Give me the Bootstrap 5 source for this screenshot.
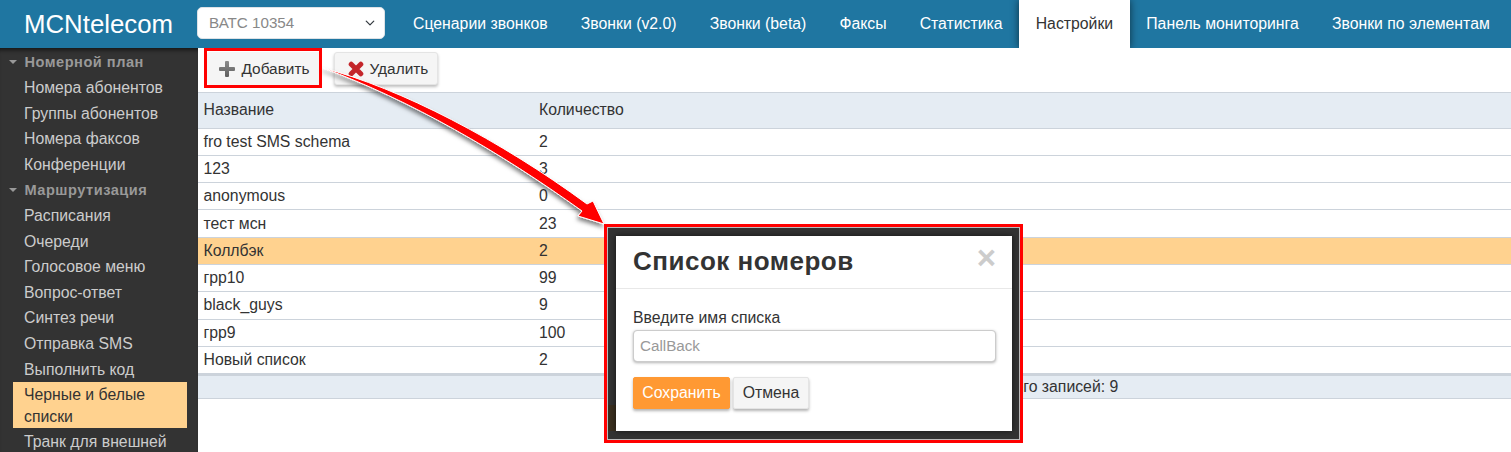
<!doctype html>
<html lang="ru">
<head>
<meta charset="utf-8">
<title>MCNtelecom</title>
<link href="https://cdn.jsdelivr.net/npm/bootstrap@5.3.0/dist/css/bootstrap.min.css" rel="stylesheet">
<style>
html,body{height:452px;overflow:hidden}
body{font-family:"Liberation Sans",Arial,sans-serif;font-size:15.8px;color:#333;background:#fff;position:relative}
.topbar{height:48px;background:#1f76a1;position:relative;z-index:2}
.brand-name{width:197px;padding-left:24px;font-size:25.8px;line-height:48px;color:#fff;white-space:nowrap}
.pbx-select{width:188px;height:32px;margin-top:7px;font-size:15.2px;color:#888;border-radius:5px;padding:1px 11px 0;background-position:right 8px center;background-size:12px 10px}
.top-tabs{margin-left:11.5px}
.top-tab{height:48px;line-height:47px;padding:0 16.55px;color:#fff;text-decoration:none;white-space:nowrap;font-size:15.8px}
.top-tab.on{background:#fff;color:#333;box-shadow:0 0 8px rgba(0,0,0,.6);clip-path:inset(0 -10px 0 -10px)}
.body-wrap{height:404px}
.side{width:198px;background:#333;color:#ccc;padding-top:1.4px;box-shadow:inset 0 5px 4px -3px rgba(0,0,0,.6);overflow:hidden;flex:none}
.side-head{height:25.6px;line-height:27px;color:#999;font-weight:700;letter-spacing:.5px;padding-left:24.5px;position:relative;font-size:14.6px}
.side-head::before{content:"";position:absolute;left:9px;top:11px;border:4px solid transparent;border-top:4px solid #999;border-bottom:0}
.side-item{line-height:25.6px;padding-left:24px;white-space:nowrap}
.side-item.on{background:#ffd28f;color:#333;margin:0 11px 0 13px;padding:2px 0 0 11px;white-space:normal;line-height:21.5px;height:46px;margin-bottom:1px}
.main-pane{min-width:0}
.tools{height:43.5px;padding:4px 0 0 9px;gap:13px}
.tool-btn{height:33px;font-size:15.4px;padding:0 9px 0 13px;color:#333;background:#f5f5f5;border:1px solid #e4e4e4;border-radius:3px;box-shadow:0 2px 3px rgba(0,0,0,.25);display:flex;align-items:center;gap:6px}
.add-btn{box-shadow:none;border-color:#f5f5f5;padding:0 10px 0 11px;gap:6.5px}
.list-tbl{width:100%;margin:0;table-layout:fixed;color:#333;font-size:15.8px}
.list-tbl th,.list-tbl td{padding:0 0 1px 5.5px;font-weight:400;border-bottom:1px solid #ccd3db;border-top:0;height:27.3px;line-height:25px;vertical-align:middle}
.list-tbl thead th{background:#e5ecf3;height:36px;border-top:1px solid #ccd3db;border-bottom:1px solid #ccd3db;vertical-align:middle;padding-bottom:2px}
.list-tbl .c1{width:335.5px}
.list-tbl tr.hl td{background:#ffd28f}
.tbl-foot{height:25px;background:#e5ecf3;border-top:2px solid #ccd3db;border-bottom:1px solid #ccd3db;line-height:21px;text-align:left;padding-left:798px}
.redbox{position:absolute;border:3px solid #f00;z-index:5}
.red-add{left:204px;top:48px;width:118px;height:40px}
.red-modal{left:604px;top:224px;width:419px;height:219px;border:3px solid #f00;background:linear-gradient(#3a2f1f,#3a2f1f) no-repeat 0 178px/9px 26px,#333;padding:9px 8px 9px 9px;outline:1px solid #bbb;outline-offset:-4px}
.modal-sheet{background:#fff;height:195px;width:396px;box-shadow:0 0 6px rgba(0,0,0,.6)}
.modal-top{height:53px;border-bottom:1px solid #e8e8e8;padding:0 17px;display:flex;justify-content:space-between;align-items:center}
.modal-title-txt{font-size:26px;font-weight:700;color:#333;letter-spacing:.5px;line-height:48px;margin-top:-2px}
.x-close{color:#ccc;font-size:33px;font-weight:700;line-height:1;margin-top:-9px;margin-right:-1px}
.modal-main{padding:18px 17px 0}
.field-label{font-size:15.8px;line-height:22px;margin:0;display:block}
.name-input{height:32px;width:363px;font-size:15.2px;border:1px solid #ccc;border-radius:4px;padding:0 6px 1px;box-shadow:0 1px 3px rgba(0,0,0,.3);color:#999;margin-top:1px;line-height:28px}
.name-input::placeholder{color:#999}
.modal-btns{gap:3px;margin-top:15px}
.save-btn,.cancel-btn{height:32px;font-size:15.8px;padding:0;border-radius:2px;box-shadow:0 2px 3px rgba(0,0,0,.3);line-height:30px}
.save-btn{background:#ff9933;color:#fff;border:1px solid #ff9933;width:97px}
.cancel-btn{background:#f5f5f5;color:#333;border:1px solid #e4e4e4;width:76px}
.arrow-art{position:absolute;left:0;top:0;z-index:4;pointer-events:none}
</style>
</head>
<body>
<nav class="topbar d-flex">
  <div class="brand-name">MCNtelecom</div>
  <select class="form-select pbx-select" aria-label="ВАТС"><option>ВАТС 10354</option></select>
  <div class="top-tabs d-flex">
    <a class="top-tab" href="#">Сценарии звонков</a>
    <a class="top-tab" href="#">Звонки (v2.0)</a>
    <a class="top-tab" href="#">Звонки (beta)</a>
    <a class="top-tab" href="#">Факсы</a>
    <a class="top-tab" href="#">Статистика</a>
    <a class="top-tab on" href="#">Настройки</a>
    <a class="top-tab" href="#">Панель мониторинга</a>
    <a class="top-tab" href="#">Звонки по элементам</a>
  </div>
</nav>
<div class="body-wrap d-flex">
  <aside class="side">
    <div class="side-head">Номерной план</div>
    <div class="side-item">Номера абонентов</div>
    <div class="side-item">Группы абонентов</div>
    <div class="side-item">Номера факсов</div>
    <div class="side-item">Конференции</div>
    <div class="side-head">Маршрутизация</div>
    <div class="side-item">Расписания</div>
    <div class="side-item">Очереди</div>
    <div class="side-item">Голосовое меню</div>
    <div class="side-item">Вопрос-ответ</div>
    <div class="side-item">Синтез речи</div>
    <div class="side-item">Отправка SMS</div>
    <div class="side-item">Выполнить код</div>
    <div class="side-item on">Черные и белые списки</div>
    <div class="side-item">Транк для внешней</div>
  </aside>
  <main class="main-pane flex-grow-1">
    <div class="tools d-flex">
      <button class="tool-btn add-btn" type="button">
        <svg width="16" height="16" viewBox="0 0 16 16" aria-hidden="true"><defs><linearGradient id="plus-fill" x1="0" y1="0" x2="0" y2="1"><stop offset="0" stop-color="#8c8c8c"/><stop offset="1" stop-color="#5f5f5f"/></linearGradient></defs><path d="M6 1q0-1 1-1h2q1 0 1 1v5h5q1 0 1 1v2q0 1-1 1h-5v5q0 1-1 1H7q-1 0-1-1v-5H1q-1 0-1-1V7q0-1 1-1h5z" fill="url(#plus-fill)"/></svg>Добавить
      </button>
      <button class="tool-btn" type="button">
        <svg width="16" height="16" viewBox="0 0 16 16" aria-hidden="true"><path d="M3.2 3.2l9.6 9.6M12.8 3.2l-9.6 9.6" stroke="#c4262b" stroke-width="5" stroke-linecap="round" fill="none"/></svg>Удалить
      </button>
    </div>
    <table class="table list-tbl">
      <thead><tr><th class="c1">Название</th><th>Количество</th></tr></thead>
      <tbody>
        <tr><td>fro test SMS schema</td><td>2</td></tr>
        <tr><td>123</td><td>3</td></tr>
        <tr><td>anonymous</td><td>0</td></tr>
        <tr><td>тест мсн</td><td>23</td></tr>
        <tr class="hl"><td>Коллбэк</td><td>2</td></tr>
        <tr><td>грр10</td><td>99</td></tr>
        <tr><td>black_guys</td><td>9</td></tr>
        <tr><td>грр9</td><td>100</td></tr>
        <tr><td>Новый список</td><td>2</td></tr>
      </tbody>
    </table>
    <div class="tbl-foot">Всего записей: 9</div>
  </main>
</div>

<svg class="arrow-art" width="1511" height="452" aria-hidden="true">
  <defs><filter id="arrow-sh" x="-10%" y="-10%" width="120%" height="120%"><feDropShadow dx="-1" dy="3" stdDeviation="2" flood-color="#000" flood-opacity=".5"/></filter></defs>
  <path filter="url(#arrow-sh)" d="M323 68C400 88 500 140 587 204L593 201L604 224L578 216L582 211C500 152 410 100 323 68Z" fill="#f00" stroke="#fff" stroke-width="1"/>
</svg>
<div class="redbox red-add"></div>
<section class="redbox red-modal">
  <div class="modal-sheet">
    <div class="modal-top"><div class="modal-title-txt">Список номеров</div><div class="x-close">×</div></div>
    <div class="modal-main">
      <label class="field-label" for="list-name">Введите имя списка</label>
      <input id="list-name" class="form-control name-input" placeholder="CallBack">
      <div class="modal-btns d-flex">
        <button class="btn save-btn" type="button">Сохранить</button>
        <button class="btn cancel-btn" type="button">Отмена</button>
      </div>
    </div>
  </div>
</section>
</body>
</html>
